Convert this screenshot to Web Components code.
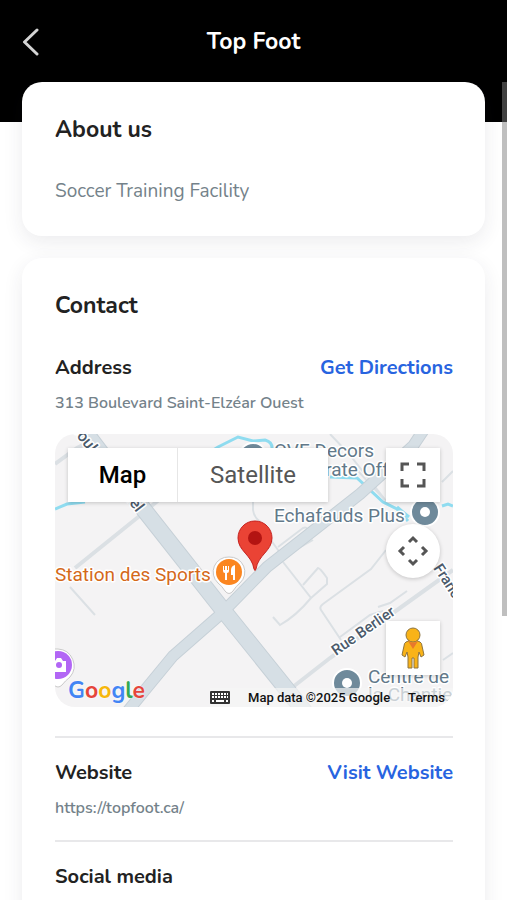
<!DOCTYPE html>
<html lang="en">
<head>
  <meta charset="UTF-8">
  <meta name="viewport" content="width=device-width, initial-scale=1.0">
  <title>Top Foot</title>
  <style>
    body {
      margin: 0;
      background: #fff;
      color: #222;
      font-family: Nunito, Lato, "Noto Sans", sans-serif;
    }
  </style>
</head>
<body>

  <app-screen>
    <top-bar slot="header">Top Foot</top-bar>
    <info-card heading="About us">
      <p>Soccer Training Facility</p>
    </info-card>
    <info-card heading="Contact">
      <contact-row label="Address" action="Get Directions" href="#directions">
        313 Boulevard Saint-Elzéar Ouest
        <location-map slot="extra"></location-map>
      </contact-row>
      <contact-row label="Website" action="Visit Website" href="https://topfoot.ca/">https://topfoot.ca/</contact-row>
      <contact-row label="Social media" class="last"></contact-row>
    </info-card>
  </app-screen>

  <script type="module">
    class AppScreen extends HTMLElement {
      constructor() {
        super();
        this.attachShadow({ mode: 'open' });
        this.shadowRoot.innerHTML = `
          <style>
            :host {
              display: flex;
              flex-direction: column;
              height: 100vh;
              overflow: hidden;
            }
            .body {
              position: relative;
              flex: 1;
              min-height: 0;
              background: linear-gradient(#000 40px, #fff 40px);
            }
            main {
              display: flex;
              flex-direction: column;
              gap: 22px;
              box-sizing: border-box;
              height: 100%;
              padding: 0 22px 22px;
              overflow-y: auto;
              scrollbar-width: none;
            }
            .thumb {
              position: absolute;
              top: 0;
              right: 0;
              width: 5px;
              background: rgba(128, 128, 128, 0.5);
              pointer-events: none;
            }
          </style>
          <slot name="header"></slot>
          <div class="body">
            <main><slot></slot></main>
            <div class="thumb"></div>
          </div>
        `;
        this.main = this.shadowRoot.querySelector('main');
        this.thumb = this.shadowRoot.querySelector('.thumb');
        this.main.addEventListener('scroll', () => this.moveThumb());
        window.addEventListener('resize', () => this.moveThumb());
      }

      connectedCallback() {
        requestAnimationFrame(() => this.moveThumb());
      }

      moveThumb() {
        const { clientHeight, scrollHeight, scrollTop } = this.main;
        const ratio = clientHeight / scrollHeight;
        this.thumb.style.height = Math.round(clientHeight * ratio) + 'px';
        this.thumb.style.top = Math.round(scrollTop * ratio) + 'px';
      }
    }

    class TopBar extends HTMLElement {
      constructor() {
        super();
        this.attachShadow({ mode: 'open' });
        this.shadowRoot.innerHTML = `
          <style>
            :host {
              display: grid;
              grid-template-columns: 60px 1fr 60px;
              align-items: center;
              box-sizing: border-box;
              height: 82px;
              padding-top: 2px;
              background: #000;
              color: #fff;
            }
            button {
              display: flex;
              align-items: center;
              height: 44px;
              padding: 0 0 0 22px;
              border: 0;
              background: none;
              color: #d4d4d4;
              cursor: pointer;
            }
            h1 {
              margin: 0;
              font-size: 23px;
              line-height: 32px;
              font-weight: 700;
              text-align: center;
            }
          </style>
          <button aria-label="Back">
            <svg width="18" height="28" viewBox="0 0 18 28" fill="none" stroke="currentColor" stroke-width="3" stroke-linecap="round" stroke-linejoin="round">
              <path d="M15 2 2.500 14 15 26"/>
            </svg>
          </button>
          <h1><slot></slot></h1>
        `;
      }
    }

    class InfoCard extends HTMLElement {
      constructor() {
        super();
        this.attachShadow({ mode: 'open' });
        this.shadowRoot.innerHTML = `
          <style>
            :host {
              display: block;
              flex: none;
              padding: 32px 32px 32px 33px;
              border-radius: 20px;
              background: #fff;
              box-shadow: 0 6px 20px rgba(40, 40, 70, 0.09);
            }
            h2 {
              margin: 0 0 32px;
              font-size: 23px;
              line-height: 32px;
              font-weight: 700;
            }
            ::slotted(p) {
              margin: 0;
              color: #74828a;
              font-size: 19px;
              line-height: 26px;
            }
          </style>
          <h2></h2>
          <slot></slot>
        `;
      }

      connectedCallback() {
        this.shadowRoot.querySelector('h2').textContent = this.getAttribute('heading');
      }
    }

    class ContactRow extends HTMLElement {
      constructor() {
        super();
        this.attachShadow({ mode: 'open' });
        this.shadowRoot.innerHTML = `
          <style>
            :host {
              display: block;
              margin-bottom: 21px;
              padding-bottom: 21px;
              border-bottom: 2px solid #e8e8ea;
            }
            :host(.last) {
              margin-bottom: 0;
              padding-bottom: 380px;
              border-bottom: 0;
            }
            .head {
              display: flex;
              justify-content: space-between;
              font-size: 20px;
              line-height: 28px;
              font-weight: 700;
            }
            h3 {
              margin: 0;
              font: inherit;
            }
            a {
              color: #2864e0;
              text-decoration: none;
            }
            .detail {
              margin-top: 10px;
              color: #74828a;
              font-size: 16px;
              line-height: 22px;
              font-weight: 600;
            }
            ::slotted(location-map) {
              margin: 20px 0 8px;
            }
          </style>
          <div class="head"><h3></h3></div>
          <div class="detail"><slot></slot></div>
          <slot name="extra"></slot>
        `;
      }

      connectedCallback() {
        const head = this.shadowRoot.querySelector('.head');
        head.querySelector('h3').textContent = this.getAttribute('label');
        if (this.hasAttribute('action')) {
          const link = document.createElement('a');
          link.href = this.getAttribute('href');
          link.textContent = this.getAttribute('action');
          head.append(link);
        }
      }
    }

    class LocationMap extends HTMLElement {
      constructor() {
        super();
        this.attachShadow({ mode: 'open' });
        this.shadowRoot.innerHTML = `
          <style>
            :host {
              display: block;
              position: relative;
              overflow: hidden;
              height: 273px;
              border-radius: 20px;
              background: #f4f3f4;
              font-family: Roboto, sans-serif;
            }
            .tiles {
              display: block;
              width: 100%;
              height: 100%;
            }
            .tiles text {
              font-size: 19px;
              paint-order: stroke;
              stroke: #fff;
              stroke-width: 3px;
              stroke-linejoin: round;
            }
            .poi { fill: #62798a; }
            .food { fill: #d4691a; }
            .tiles .street {
              fill: #4b5a6b;
              font-size: 15px;
              font-weight: 500;
            }
            .tiles .avenue { font-size: 16px; }
            .overlay {
              position: absolute;
              inset: 0;
              display: flex;
              flex-direction: column;
              justify-content: space-between;
            }
            .controls {
              display: flex;
              justify-content: space-between;
              align-items: flex-start;
              padding: 14px 13px 0;
            }
            button {
              padding: 0;
              border: 0;
              background: #fff;
              font-family: inherit;
              cursor: pointer;
            }
            .types {
              display: flex;
              box-shadow: 0 1px 4px rgba(0, 0, 0, 0.2);
            }
            .types button {
              width: 150px;
              height: 54px;
              color: #565656;
              font-size: 24px;
            }
            .types button:first-child {
              width: 110px;
              border-right: 1px solid #e6e6e6;
              color: #000;
              font-weight: 500;
            }
            .side {
              display: flex;
              flex-direction: column;
            }
            .side button {
              display: grid;
              place-items: center;
              width: 54px;
              height: 54px;
              box-shadow: 0 1px 4px rgba(0, 0, 0, 0.2);
            }
            .side .pan {
              margin: 22px 0 43px;
              border-radius: 50%;
            }
            .legal {
              display: flex;
              align-items: flex-end;
              justify-content: space-between;
              padding-left: 13px;
            }
            .logo {
              font-family: Nunito, Lato, sans-serif;
              font-size: 23px;
              font-weight: 700;
              line-height: 32px;
              text-decoration: none;
              text-shadow: 0 0 2px #fff;
            }
            .b { color: #4285f4; }
            .r { color: #e5453b; }
            .y { color: #f6b70d; }
            .g { color: #34a853; }
            .terms {
              display: flex;
              align-items: center;
              gap: 18px;
              height: 19px;
              padding-right: 8px;
              background: rgba(245, 245, 245, 0.7);
              color: #111;
              font-size: 13px;
              font-weight: 500;
            }
            .terms button {
              height: 18px;
              background: none;
            }
            .terms svg { display: block; }
            .terms a {
              color: inherit;
              text-decoration: none;
            }
          </style>
          <svg class="tiles" viewBox="0 0 398 273" preserveAspectRatio="xMidYMid slice">
            <!-- small streets and lots -->
            <g fill="none" stroke="#dbe0e4" stroke-width="2">
              <path stroke-width="4" d="M20 134 82 84 135 40M0 30 22 14 42 4"/>
              <path d="M15 153 40 181M198 66v10q1 8 8 12"/>
              <path d="M223 113 248 94q4-2 5 3M213 102l15 21M228 123l30-17"/>
              <path d="M228 128 256 164Q241 182 225 191L218 183M248 151 263 134Q265 134 272 144V150L256 164"/>
              <path d="M331 116 316 135 268 170q-4 3-2 6l20 30M285 203l30-22 13-4M323 173l12-4 17-12"/>
              <path d="M275 0 294 20 332 68M302 36l28 30M387 48l11-11M388 226l10-7"/>
              <path stroke-width="4" d="M234 256 275 224 338 179 398 136"/>
            </g>
            <!-- water -->
            <g fill="none" stroke="#8fdcf0" stroke-width="3">
              <path d="M0 75 12 70 30 68M155 18l8-5 20-10 15 4 12-1q8 2 7 10M275 43l27 1 26 24 14 7 11 12M342 73l12 10M387 72l6-2 5 2"/>
            </g>
            <!-- main roads -->
            <g fill="none" stroke-linejoin="round">
              <path stroke="#c6d0d7" stroke-width="12" d="M68 283 90 256 118 222 166 180 212 133 305 60 358 12 370-6"/>
              <path stroke="#c6d0d7" stroke-width="17" d="M28-5 90 77 168 176 250 278"/>
              <path stroke="#d6dfe5" stroke-width="10" d="M68 283 90 256 118 222 166 180 212 133 305 60 358 12 370-6"/>
              <path stroke="#d6dfe5" stroke-width="15" d="M28-5 90 77 168 176 250 278"/>
            </g>
            <text class="street avenue" transform="translate(15 -6) rotate(52)">Boul. Industriel</text>
            <text class="street" transform="translate(281 222) rotate(-35)">Rue Berlier</text>
            <text class="street" transform="translate(378 134) rotate(57)">Franc</text>
            <text class="poi" x="219" y="23">OVE Decors</text>
            <text class="poi" x="219" y="42">Corporate Off</text>
            <text class="poi" x="219" y="88">Echafauds Plus</text>
            <text class="poi" x="313" y="249">Centre de</text>
            <text class="poi" x="313" y="267">la Chantie</text>
            <text class="food" x="0" y="147">Station des Sports</text>
            <!-- place pins -->
            <g fill="#6f8a9b" stroke="#fff" stroke-width="2">
              <circle cx="198" cy="23" r="14"/>
              <circle cx="370" cy="78" r="14"/>
              <circle cx="292" cy="249" r="14"/>
            </g>
            <g fill="#fff">
              <circle cx="370" cy="78" r="5"/>
              <circle cx="292" cy="249" r="5"/>
            </g>
            <path d="M174 123a15 15 0 0 1 11 26q-4 3-7 8-4 5-8 0-3-5-7-8a15 15 0 0 1 11-26z" fill="#fff" stroke="#c9c9c9"/>
            <circle cx="174" cy="138" r="13" fill="#fb8620"/>
            <path d="M168 132v5q0 2 2 2v7h2v-7q2 0 2-2v-5h-1v4h-1v-4h-2v4h-1v-4zM180 131q-4 1-4 5v5h2v5h2z" fill="#fff"/>
            <path d="M3 215a17 17 0 0 1 12 28q-5 4-8 8-4 4-8 0V215z" fill="#fff" stroke="#c9c9c9"/>
            <circle cx="3" cy="231" r="14" fill="#b266f5"/>
            <path d="M-3 227h3l2-3h4l2 3h3v11H-3z" fill="#fff"/>
            <circle cx="4" cy="231" r="3" fill="#b266f5"/>
            <path d="M200 87c10 0 17 8 17 17 0 13-14 17-16 31q-1 3-2 0c-2-14-16-18-16-31 0-9 7-17 17-17z" fill="#ea4335" stroke="#c5221f"/>
            <circle cx="200" cy="104" r="7" fill="#b31412"/>
          </svg>
          <div class="overlay">
            <div class="controls">
              <div class="types">
                <button>Map</button>
                <button>Satellite</button>
              </div>
              <div class="side">
                <button aria-label="Toggle fullscreen view">
                  <svg width="26" height="26" viewBox="0 0 26 26" fill="none" stroke="#555" stroke-width="3">
                    <path d="M2 9V2h7M17 2h7v7M24 17v7h-7M9 24H2v-7"/>
                  </svg>
                </button>
                <button class="pan" aria-label="Map camera controls">
                  <svg width="32" height="32" viewBox="0 0 32 32" fill="none" stroke="#555" stroke-width="3">
                    <path d="M12 7l4-4 4 4M12 25l4 4 4-4M7 12l-4 4 4 4M25 12l4 4-4 4"/>
                  </svg>
                </button>
                <button aria-label="Open Street View">
                  <svg width="26" height="42" viewBox="0 0 26 42">
                    <g fill="#f9b318" stroke="#8d7440" stroke-width="1" stroke-linejoin="round">
                      <path d="M6 15q7-4 14 0 2 1 2 4l2 9-3 2-2-5-1 5v11h-4V31h-2v10H8V30l-1-5-2 5-3-2 2-9q0-3 2-4z"/>
                      <circle cx="13" cy="8" r="7"/>
                    </g>
                    <path d="M8 14q5 3 10 0l-5 8z" fill="#e8782c"/>
                  </svg>
                </button>
              </div>
            </div>
            <div class="legal">
              <a class="logo" href="#google-maps" aria-label="Google"><span class="b">G</span><span class="r">o</span><span class="y">o</span><span class="b">g</span><span class="g">l</span><span class="r">e</span></a>
              <div class="terms">
                <button aria-label="Keyboard shortcuts">
                  <svg width="20" height="13" viewBox="0 0 20 13">
                    <rect width="20" height="13" rx="1" fill="#333"/>
                    <path d="M2 3h16M2 6h16" stroke="#fff" stroke-width="2" stroke-dasharray="2 1" fill="none"/>
                    <path d="M2 10h2M6 10h8M16 10h2" stroke="#fff" stroke-width="2"/>
                  </svg>
                </button>
                <span>Map data ©2025 Google</span>
                <a href="#terms">Terms</a>
              </div>
            </div>
          </div>
        `;
      }
    }

    customElements.define('top-bar', TopBar);
    customElements.define('info-card', InfoCard);
    customElements.define('contact-row', ContactRow);
    customElements.define('location-map', LocationMap);
    customElements.define('app-screen', AppScreen);
  </script>
</body>
</html>
